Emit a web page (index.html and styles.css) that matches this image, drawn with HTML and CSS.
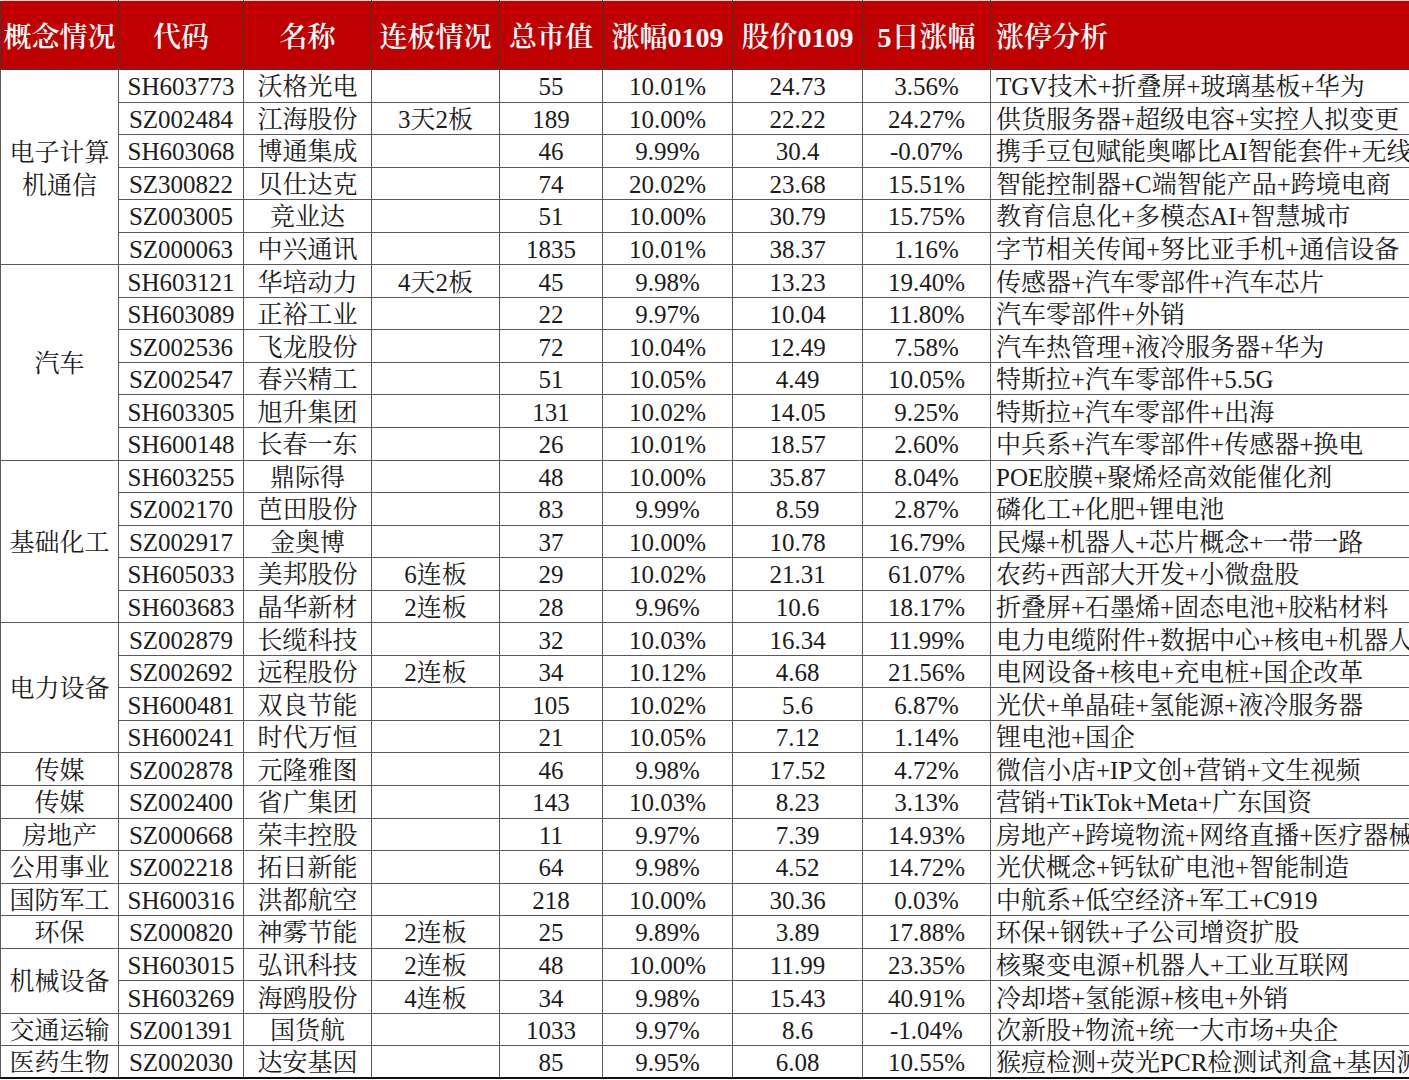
FILE: index.html
```html
<!DOCTYPE html>
<html lang="zh-CN">
<head>
<meta charset="utf-8">
<title>涨停分析</title>
<link rel="stylesheet" href="styles.css">
</head>
<body>
<table class="sheet">
<colgroup>
<col class="c-cat"><col class="c-code"><col class="c-name"><col class="c-lb"><col class="c-cap"><col class="c-pct"><col class="c-price"><col class="c-5d"><col class="c-note">
</colgroup>
<thead>
<tr class="head">
<th>概念情况</th><th>代码</th><th>名称</th><th>连板情况</th><th>总市值</th><th>涨幅0109</th><th>股价0109</th><th>5日涨幅</th><th class="note">涨停分析</th>
</tr>
</thead>
<tbody>
<tr><td class="cat wrap" rowspan="6">电子计算机通信</td><td>SH603773</td><td>沃格光电</td><td></td><td>55</td><td>10.01%</td><td>24.73</td><td>3.56%</td><td class="note">TGV技术+折叠屏+玻璃基板+华为</td></tr>
<tr><td>SZ002484</td><td>江海股份</td><td>3天2板</td><td>189</td><td>10.00%</td><td>22.22</td><td>24.27%</td><td class="note">供货服务器+超级电容+实控人拟变更</td></tr>
<tr><td>SH603068</td><td>博通集成</td><td></td><td>46</td><td>9.99%</td><td>30.4</td><td>-0.07%</td><td class="note">携手豆包赋能奥嘟比AI智能套件+无线芯片</td></tr>
<tr><td>SZ300822</td><td>贝仕达克</td><td></td><td>74</td><td>20.02%</td><td>23.68</td><td>15.51%</td><td class="note">智能控制器+C端智能产品+跨境电商</td></tr>
<tr><td>SZ003005</td><td>竞业达</td><td></td><td>51</td><td>10.00%</td><td>30.79</td><td>15.75%</td><td class="note">教育信息化+多模态AI+智慧城市</td></tr>
<tr><td>SZ000063</td><td>中兴通讯</td><td></td><td>1835</td><td>10.01%</td><td>38.37</td><td>1.16%</td><td class="note">字节相关传闻+努比亚手机+通信设备</td></tr>

<tr><td class="cat" rowspan="6">汽车</td><td>SH603121</td><td>华培动力</td><td>4天2板</td><td>45</td><td>9.98%</td><td>13.23</td><td>19.40%</td><td class="note">传感器+汽车零部件+汽车芯片</td></tr>
<tr><td>SH603089</td><td>正裕工业</td><td></td><td>22</td><td>9.97%</td><td>10.04</td><td>11.80%</td><td class="note">汽车零部件+外销</td></tr>
<tr><td>SZ002536</td><td>飞龙股份</td><td></td><td>72</td><td>10.04%</td><td>12.49</td><td>7.58%</td><td class="note">汽车热管理+液冷服务器+华为</td></tr>
<tr><td>SZ002547</td><td>春兴精工</td><td></td><td>51</td><td>10.05%</td><td>4.49</td><td>10.05%</td><td class="note">特斯拉+汽车零部件+5.5G</td></tr>
<tr><td>SH603305</td><td>旭升集团</td><td></td><td>131</td><td>10.02%</td><td>14.05</td><td>9.25%</td><td class="note">特斯拉+汽车零部件+出海</td></tr>
<tr><td>SH600148</td><td>长春一东</td><td></td><td>26</td><td>10.01%</td><td>18.57</td><td>2.60%</td><td class="note">中兵系+汽车零部件+传感器+换电</td></tr>

<tr><td class="cat" rowspan="5">基础化工</td><td>SH603255</td><td>鼎际得</td><td></td><td>48</td><td>10.00%</td><td>35.87</td><td>8.04%</td><td class="note">POE胶膜+聚烯烃高效能催化剂</td></tr>
<tr><td>SZ002170</td><td>芭田股份</td><td></td><td>83</td><td>9.99%</td><td>8.59</td><td>2.87%</td><td class="note">磷化工+化肥+锂电池</td></tr>
<tr><td>SZ002917</td><td>金奥博</td><td></td><td>37</td><td>10.00%</td><td>10.78</td><td>16.79%</td><td class="note">民爆+机器人+芯片概念+一带一路</td></tr>
<tr><td>SH605033</td><td>美邦股份</td><td>6连板</td><td>29</td><td>10.02%</td><td>21.31</td><td>61.07%</td><td class="note">农药+西部大开发+小微盘股</td></tr>
<tr><td>SH603683</td><td>晶华新材</td><td>2连板</td><td>28</td><td>9.96%</td><td>10.6</td><td>18.17%</td><td class="note">折叠屏+石墨烯+固态电池+胶粘材料</td></tr>

<tr><td class="cat" rowspan="4">电力设备</td><td>SZ002879</td><td>长缆科技</td><td></td><td>32</td><td>10.03%</td><td>16.34</td><td>11.99%</td><td class="note">电力电缆附件+数据中心+核电+机器人</td></tr>
<tr><td>SZ002692</td><td>远程股份</td><td>2连板</td><td>34</td><td>10.12%</td><td>4.68</td><td>21.56%</td><td class="note">电网设备+核电+充电桩+国企改革</td></tr>
<tr><td>SH600481</td><td>双良节能</td><td></td><td>105</td><td>10.02%</td><td>5.6</td><td>6.87%</td><td class="note">光伏+单晶硅+氢能源+液冷服务器</td></tr>
<tr><td>SH600241</td><td>时代万恒</td><td></td><td>21</td><td>10.05%</td><td>7.12</td><td>1.14%</td><td class="note">锂电池+国企</td></tr>

<tr><td class="cat">传媒</td><td>SZ002878</td><td>元隆雅图</td><td></td><td>46</td><td>9.98%</td><td>17.52</td><td>4.72%</td><td class="note">微信小店+IP文创+营销+文生视频</td></tr>
<tr><td class="cat">传媒</td><td>SZ002400</td><td>省广集团</td><td></td><td>143</td><td>10.03%</td><td>8.23</td><td>3.13%</td><td class="note">营销+TikTok+Meta+广东国资</td></tr>
<tr><td class="cat">房地产</td><td>SZ000668</td><td>荣丰控股</td><td></td><td>11</td><td>9.97%</td><td>7.39</td><td>14.93%</td><td class="note">房地产+跨境物流+网络直播+医疗器械</td></tr>
<tr><td class="cat">公用事业</td><td>SZ002218</td><td>拓日新能</td><td></td><td>64</td><td>9.98%</td><td>4.52</td><td>14.72%</td><td class="note">光伏概念+钙钛矿电池+智能制造</td></tr>
<tr><td class="cat">国防军工</td><td>SH600316</td><td>洪都航空</td><td></td><td>218</td><td>10.00%</td><td>30.36</td><td>0.03%</td><td class="note">中航系+低空经济+军工+C919</td></tr>
<tr><td class="cat">环保</td><td>SZ000820</td><td>神雾节能</td><td>2连板</td><td>25</td><td>9.89%</td><td>3.89</td><td>17.88%</td><td class="note">环保+钢铁+子公司增资扩股</td></tr>
<tr><td class="cat" rowspan="2">机械设备</td><td>SH603015</td><td>弘讯科技</td><td>2连板</td><td>48</td><td>10.00%</td><td>11.99</td><td>23.35%</td><td class="note">核聚变电源+机器人+工业互联网</td></tr>
<tr><td>SH603269</td><td>海鸥股份</td><td>4连板</td><td>34</td><td>9.98%</td><td>15.43</td><td>40.91%</td><td class="note">冷却塔+氢能源+核电+外销</td></tr>
<tr><td class="cat">交通运输</td><td>SZ001391</td><td>国货航</td><td></td><td>1033</td><td>9.97%</td><td>8.6</td><td>-1.04%</td><td class="note">次新股+物流+统一大市场+央企</td></tr>
<tr><td class="cat">医药生物</td><td>SZ002030</td><td>达安基因</td><td></td><td>85</td><td>9.95%</td><td>6.08</td><td>10.55%</td><td class="note">猴痘检测+荧光PCR检测试剂盒+基因测序</td></tr>
</tbody>
</table>
</body>
</html>
```

FILE: styles.css
```css
html, body {
  margin: 0;
  padding: 0;
  background: #ffffff;
  overflow: hidden;
}

.sheet {
  table-layout: fixed;
  border-collapse: collapse;
  width: 1409px;
  font-family: "Liberation Serif", "Noto Serif CJK SC", "Noto Sans CJK SC", serif;
  color: #1c1c1c;
  border-bottom: 2px solid #111;
}

.c-cat { width: 118px; }
.c-code { width: 125px; }
.c-name { width: 128px; }
.c-lb { width: 128px; }
.c-cap { width: 103px; }
.c-pct { width: 130px; }
.c-price { width: 130px; }
.c-5d { width: 128px; }
.c-note { width: 419px; }

.head th {
  height: 68px;
  background: #c00000;
  color: #ffffff;
  font-size: 28px;
  font-weight: 600;
  text-align: center;
  padding: 0;
  white-space: nowrap;
  overflow: hidden;
  border: 1px solid #3a3a3a;
  border-top: 1px solid #e8d8d8;
}

.head th.note {
  text-align: left;
  padding-left: 5px;
}

tbody tr {
  height: 32.55px;
}

tbody td {
  font-size: 25px;
  line-height: 27px;
  padding: 2px 0 0 0;
  text-align: center;
  white-space: nowrap;
  overflow: hidden;
  border: 1px solid #5a5a5a;
  vertical-align: middle;
}

tbody td.note {
  text-align: left;
  padding-left: 5px;
  border-right: none;
}

tbody td.cat {
  padding: 2px 0 0 0;
}

tbody td.cat.wrap {
  white-space: normal;
  line-height: 33px;
  padding: 4px 4px 0;
}
```
